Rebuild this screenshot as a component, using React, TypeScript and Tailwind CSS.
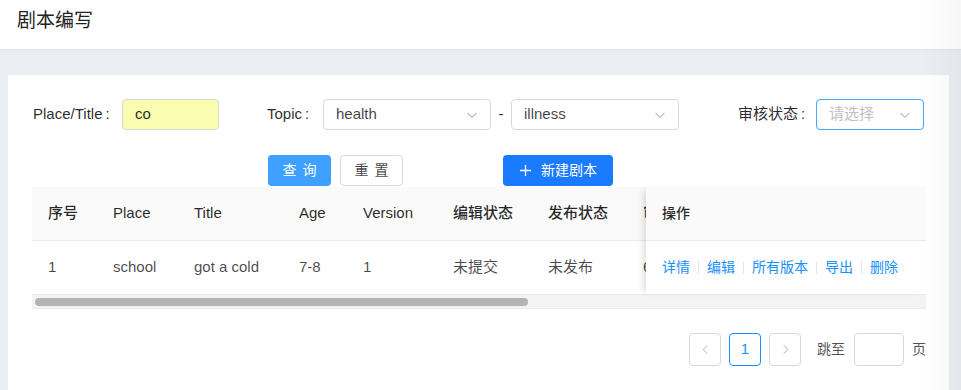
import React from 'react';

const font = { fontFamily: '"Liberation Sans", "Noto Sans CJK SC", sans-serif' };

function Chevron({ className = '' }: { className?: string }) {
  return (
    <svg viewBox="0 0 12 12" className={`w-[12px] h-[12px] ${className}`} fill="none" stroke="currentColor" strokeWidth="1.1">
      <path d="M1.5 4l4.5 4.5L10.5 4" />
    </svg>
  );
}

function Select({ value, placeholder, active }: { value?: string; placeholder?: string; active?: boolean }) {
  return (
    <div className={`h-[31px] flex items-center justify-between pl-[12px] pr-[12px] rounded-[4px] bg-white border ${active ? 'border-[#40a9ff] w-[108px]' : 'border-[#d9d9d9] w-[168px]'}`}>
      <span className={value ? 'text-[15px] text-[rgba(0,0,0,0.75)]' : 'text-[15px] text-[#bfbfbf]'}>{value || placeholder}</span>
      <Chevron className="text-[#bfbfbf]" />
    </div>
  );
}

const cols = [
  { key: 'idx', title: '序号', w: 65 },
  { key: 'place', title: 'Place', w: 81 },
  { key: 'title', title: 'Title', w: 105 },
  { key: 'age', title: 'Age', w: 64 },
  { key: 'version', title: 'Version', w: 90 },
  { key: 'edit', title: '编辑状态', w: 95 },
  { key: 'publish', title: '发布状态', w: 95 },
  { key: 'audit', title: '审核状态', w: 100 },
];

const row: Record<string, string> = {
  idx: '1', place: 'school', title: 'got a cold', age: '7-8', version: '1',
  edit: '未提交', publish: '未发布', audit: '6',
};

const actions = ['详情', '编辑', '所有版本', '导出', '删除'];

export default function App() {
  return (
    <div style={font} className="relative w-[961px] h-[390px] overflow-hidden bg-[#eaedf1] text-[14px] text-[rgba(0,0,0,0.85)]">
      <div className="h-[50px] bg-white border-b border-[#e1e4e8] px-[17px] pt-[8px]">
        <h1 className="text-[19px] leading-[26px] text-[#222]">剧本编写</h1>
      </div>

      <div className="flex pt-[25px] pl-[8px] pr-[12px]">
        <div className="flex-1 bg-white pt-[24px] pl-[24px] pr-[23px] pb-[30px]">
          {/* filters */}
          <div className="flex items-center h-[31px] text-[15px]">
            <span className="w-[90px] pl-[1px]">Place/Title<span className="ml-[3px]">:</span></span>
            <div className="w-[97px] h-[31px] rounded-[4px] border border-[#d9d9d9] bg-[#fafcb0] flex items-center pl-[12px]">co</div>
            <span className="ml-[48px] w-[56px]">Topic<span className="ml-[3px]">:</span></span>
            <Select value="health" />
            <span className="w-[20px] text-center">-</span>
            <Select value="illness" />
            <span className="ml-[59px] w-[78px]">审核状态<span className="ml-[3px]">:</span></span>
            <Select placeholder="请选择" active />
          </div>

          <div className="flex items-center h-[31px] mt-[25px]">
            <button className="ml-[236px] w-[63px] h-[31px] rounded-[4px] bg-[#40a0ff] text-white tracking-[6px] pl-[6px]">查询</button>
            <button className="ml-[9px] w-[63px] h-[31px] rounded-[4px] bg-white border border-[#d9d9d9] text-[rgba(0,0,0,0.75)] tracking-[6px] pl-[6px]">重置</button>
            <button className="ml-[100px] w-[110px] h-[31px] rounded-[4px] bg-[#1a7bff] text-white flex items-center justify-center gap-[9px]">
              <svg viewBox="0 0 14 14" className="w-[13px] h-[13px]" stroke="currentColor" strokeWidth="1.4"><path d="M7 1v12M1 7h12" /></svg>
              新建剧本
            </button>
          </div>

          {/* table */}
          <div className="flex mt-[1px]">
            <div className="w-[614px] overflow-hidden">
              <div className="flex w-max h-[54px] bg-[#fafafa] border-b border-[#eaeaea] items-center font-medium">
                {cols.map(c => (
                  <div key={c.key} style={{ width: c.w }} className="pl-[16px] whitespace-nowrap text-[15px]">{c.title}</div>
                ))}
              </div>
              <div className="flex w-max h-[54px] border-b border-[#eaeaea] items-center text-[rgba(0,0,0,0.72)]">
                {cols.map(c => (
                  <div key={c.key} style={{ width: c.w }} className="pl-[16px] whitespace-nowrap text-[15px]">{row[c.key]}</div>
                ))}
              </div>
            </div>
            <div className="w-[280px] shadow-[-6px_0_6px_-3px_rgba(0,0,0,0.12)] relative z-10 bg-white">
              <div className="h-[54px] bg-[#fafafa] border-b border-[#eaeaea] flex items-center pl-[16px] font-medium">操作</div>
              <div className="h-[54px] border-b border-[#eaeaea] flex items-center pl-[16px] text-[#1890ff]">
                {actions.map((a, i) => (
                  <React.Fragment key={a}>
                    {i > 0 && <span className="mx-[8px] w-px h-[13px] bg-[#e6e6e6]" />}
                    <span>{a}</span>
                  </React.Fragment>
                ))}
              </div>
            </div>
          </div>
          <div className="h-[14px] bg-[#f3f3f3] border-b border-[#ececec] flex items-center pl-[3px]">
            <div className="w-[493px] h-[8px] rounded-full bg-[#b3b3b3]" />
          </div>

          {/* pagination */}
          <div className="flex items-center justify-end mt-[24px] text-[rgba(0,0,0,0.7)]">
            <div className="w-[32px] h-[33px] rounded-[4px] border border-[#d9d9d9] flex items-center justify-center text-[#c4c4c4]">
              <svg viewBox="0 0 12 12" className="w-[11px] h-[11px]" fill="none" stroke="currentColor" strokeWidth="1.1"><path d="M8 1.5L3.5 6 8 10.5" /></svg>
            </div>
            <div className="ml-[8px] w-[32px] h-[33px] rounded-[4px] border border-[#1890ff] flex items-center justify-center text-[15px] text-[#1890ff]">1</div>
            <div className="ml-[8px] w-[32px] h-[33px] rounded-[4px] border border-[#d9d9d9] flex items-center justify-center text-[#c4c4c4]">
              <svg viewBox="0 0 12 12" className="w-[11px] h-[11px]" fill="none" stroke="currentColor" strokeWidth="1.1"><path d="M4 1.5L8.5 6 4 10.5" /></svg>
            </div>
            <span className="ml-[16px]">跳至</span>
            <div className="ml-[9px] w-[50px] h-[33px] rounded-[4px] border border-[#d9d9d9] bg-white" />
            <span className="ml-[8px]">页</span>
          </div>
        </div>
      </div>

      <div className="absolute top-0 right-0 w-[40px] h-full bg-gradient-to-r from-transparent to-black/[0.03] pointer-events-none" />
    </div>
  );
}
